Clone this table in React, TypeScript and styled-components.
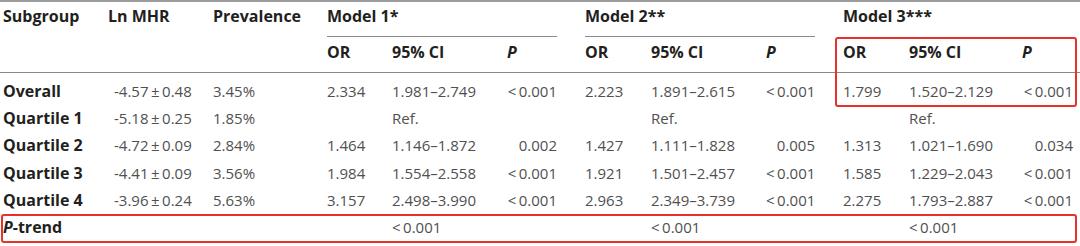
import React from "react";
import styled, { createGlobalStyle } from "styled-components";

const Global = createGlobalStyle`
  html, body { margin: 0; padding: 0; background: #ffffff; }
  body { font-family: "Open Sans", "Noto Sans", sans-serif; }
`;

const Wrap = styled.div`
  position: relative;
  width: 1080px;
  height: 246px;
  overflow: hidden;
  background: #fff;
`;

const Table = styled.table`
  width: 1080px;
  table-layout: fixed;
  border-collapse: separate;
  border-spacing: 0;
  border-top: 2px solid #9c9c9c;
`;

const HeadCell = styled.th<{ $group?: boolean; $first?: boolean }>`
  height: 35px;
  box-sizing: border-box;
  padding: 4px 0 0 ${(p) => (p.$first ? "3px" : "0")};
  vertical-align: top;
  text-align: left;
  font-size: 16px;
  line-height: 20px;
  font-weight: 700;
  color: #231f20;
  white-space: nowrap;
  border-bottom: 1px solid ${(p) => (p.$group ? "#8a8a8a" : "transparent")};
`;

const SubCell = styled.th<{ $italic?: boolean }>`
  height: 36px;
  box-sizing: border-box;
  padding: 5.2px 0 0 0;
  vertical-align: top;
  text-align: left;
  font-size: 16px;
  line-height: 20px;
  font-weight: 700;
  font-style: ${(p) => (p.$italic ? "italic" : "normal")};
  color: #231f20;
  white-space: nowrap;
  border-bottom: 1px solid #8a8a8a;
`;

const Label = styled.td<{ $top?: boolean }>`
  padding: ${(p) => (p.$top ? "4.9px" : "0")} 0 0 3px;
  font-size: 16px;
  line-height: 27.2px;
  font-weight: 700;
  color: #231f20;
  white-space: nowrap;
`;

const Cell = styled.td<{ $top?: boolean; $right?: boolean; $indent?: number }>`
  padding: ${(p) => (p.$top ? "4.9px" : "0")} 0 0 ${(p) => p.$indent ?? 0}px;
  font-size: 15px;
  line-height: 27.2px;
  font-weight: 400;
  color: #505050;
  text-align: ${(p) => (p.$right ? "right" : "left")};
  white-space: nowrap;
`;

const It = styled.i`
  font-style: italic;
`;

const Mark = styled.div<{ $x: number; $y: number; $w: number; $h: number }>`
  position: absolute;
  left: ${(p) => p.$x}px;
  top: ${(p) => p.$y}px;
  width: ${(p) => p.$w}px;
  height: ${(p) => p.$h}px;
  box-sizing: border-box;
  border: 2px solid #e5322d;
  border-radius: 3px;
  pointer-events: none;
`;

const widths = [108, 105, 114, 65, 115, 50, 28, 66, 115, 49, 28, 66, 113, 51, 7];

type Model = { or: string; ci: string; p: string } | "ref";
type Row = { label: string; ln: string; prev: string; models: Model[] };

const pm = (a: string, b: string) => `${a}\u2009±\u2009${b}`;
const lt = "<\u20090.001";

const rows: Row[] = [
  {
    label: "Overall",
    ln: pm("-4.57", "0.48"),
    prev: "3.45%",
    models: [
      { or: "2.334", ci: "1.981–2.749", p: lt },
      { or: "2.223", ci: "1.891–2.615", p: lt },
      { or: "1.799", ci: "1.520–2.129", p: lt },
    ],
  },
  { label: "Quartile 1", ln: pm("-5.18", "0.25"), prev: "1.85%", models: ["ref", "ref", "ref"] },
  {
    label: "Quartile 2",
    ln: pm("-4.72", "0.09"),
    prev: "2.84%",
    models: [
      { or: "1.464", ci: "1.146–1.872", p: "0.002" },
      { or: "1.427", ci: "1.111–1.828", p: "0.005" },
      { or: "1.313", ci: "1.021–1.690", p: "0.034" },
    ],
  },
  {
    label: "Quartile 3",
    ln: pm("-4.41", "0.09"),
    prev: "3.56%",
    models: [
      { or: "1.984", ci: "1.554–2.558", p: lt },
      { or: "1.921", ci: "1.501–2.457", p: lt },
      { or: "1.585", ci: "1.229–2.043", p: lt },
    ],
  },
  {
    label: "Quartile 4",
    ln: pm("-3.96", "0.24"),
    prev: "5.63%",
    models: [
      { or: "3.157", ci: "2.498–3.990", p: lt },
      { or: "2.963", ci: "2.349–3.739", p: lt },
      { or: "2.275", ci: "1.793–2.887", p: lt },
    ],
  },
];

const ModelCells: React.FC<{ m: Model; top?: boolean }> = ({ m, top }) => (
  <>
    {m === "ref" ? (
      <>
        <Cell $top={top} />
        <Cell $top={top}>Ref.</Cell>
        <Cell $top={top} />
      </>
    ) : (
      <>
        <Cell $top={top}>{m.or}</Cell>
        <Cell $top={top}>{m.ci}</Cell>
        <Cell $top={top} $right>
          {m.p}
        </Cell>
      </>
    )}
    <Cell $top={top} />
  </>
);

export default function App() {
  return (
    <Wrap>
      <Global />
      <Table>
        <colgroup>
          {widths.map((w, i) => (
            <col key={i} style={{ width: w }} />
          ))}
        </colgroup>
        <thead>
          <tr>
            <HeadCell $first>Subgroup</HeadCell>
            <HeadCell>Ln MHR</HeadCell>
            <HeadCell>Prevalence</HeadCell>
            <HeadCell colSpan={3} $group>
              Model 1*
            </HeadCell>
            <HeadCell />
            <HeadCell colSpan={3} $group>
              Model 2**
            </HeadCell>
            <HeadCell />
            <HeadCell colSpan={4}>Model 3***</HeadCell>
          </tr>
          <tr>
            <SubCell />
            <SubCell />
            <SubCell />
            {[0, 1, 2].map((i) => (
              <React.Fragment key={i}>
                <SubCell>OR</SubCell>
                <SubCell>95% CI</SubCell>
                <SubCell $italic>P</SubCell>
                <SubCell />
              </React.Fragment>
            ))}
          </tr>
        </thead>
        <tbody>
          {rows.map((r, ri) => (
            <tr key={r.label}>
              <Label $top={ri === 0}>{r.label}</Label>
              <Cell $top={ri === 0} $indent={6}>
                {r.ln}
              </Cell>
              <Cell $top={ri === 0}>{r.prev}</Cell>
              {r.models.map((m, mi) => (
                <ModelCells key={mi} m={m} top={ri === 0} />
              ))}
            </tr>
          ))}
          <tr>
            <Label>
              <It>P</It>-trend
            </Label>
            <Cell />
            <Cell />
            {[0, 1, 2].map((i) => (
              <React.Fragment key={i}>
                <Cell />
                <Cell>{lt}</Cell>
                <Cell />
                <Cell />
              </React.Fragment>
            ))}
          </tr>
        </tbody>
      </Table>
      <Mark $x={835} $y={37} $w={242} $h={70} />
      <Mark $x={1} $y={214} $w={1076} $h={29} />
    </Wrap>
  );
}
